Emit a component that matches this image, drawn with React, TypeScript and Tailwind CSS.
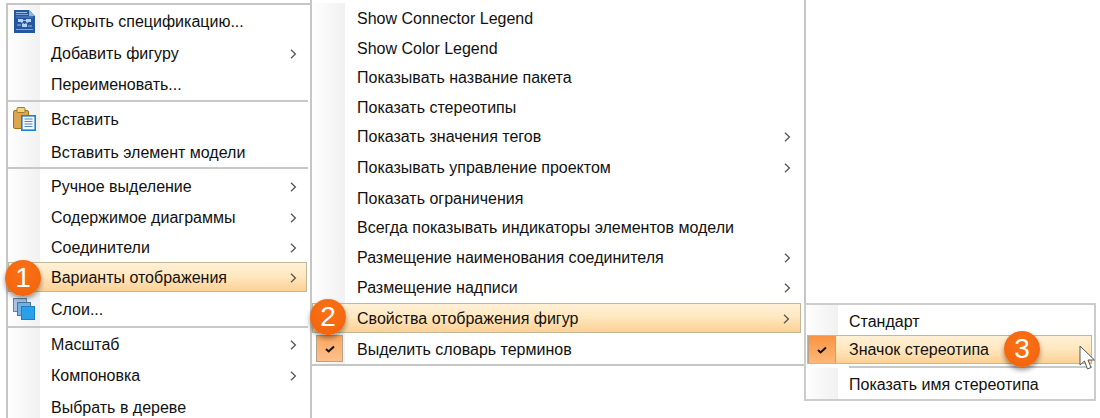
import React from "react";

type Row = { label: string; h: number; arrow?: boolean; icon?: React.ReactNode };

const Chevron = () => (
  <svg width="7" height="10" viewBox="0 0 7 10" className="shrink-0">
    <path d="M1 0.8 L5.4 5 L1 9.2" fill="none" stroke="#555" strokeWidth="1.3" />
  </svg>
);

const SpecIcon = () => (
  <svg width="21" height="23" viewBox="0 0 21 23">
    <path d="M0 0 H15 L21 6 V23 H0 Z" fill="#2557a0" />
    <path d="M15 0 L21 6 H15 Z" fill="#8fb4e0" />
    <rect x="2" y="2" width="11" height="1" fill="#9dbde4" />
    <rect x="2" y="4" width="12" height="1" fill="#7ca3d6" />
    <rect x="2" y="6.5" width="17" height="1" fill="#5f8cc8" />
    <rect x="4" y="9" width="5" height="3" fill="#b8d2f0" />
    <rect x="12" y="9" width="5" height="3" fill="#b8d2f0" />
    <rect x="8" y="14" width="5" height="3" fill="#b8d2f0" />
    <path d="M7 12 L10 14 M14 12 L11 14 M9 10.5 H12 M3 15 H7 M14 16 H18" stroke="#9fc0e8" strokeWidth="1" />
    <rect x="2" y="19" width="17" height="1" fill="#7ea5d6" />
  </svg>
);

const PasteIcon = () => (
  <svg width="23" height="24" viewBox="0 0 23 24">
    <rect x="0.5" y="3.5" width="15" height="18" rx="1.5" fill="#dca64e" stroke="#a06f22" />
    <rect x="4" y="0.5" width="8" height="5" rx="1" fill="#f3d27c" stroke="#a67a2c" />
    <rect x="8.8" y="8.8" width="13.4" height="14.4" fill="#f2f8fe" stroke="#1d7fd0" strokeWidth="1.6" />
    <path d="M11.5 12 H19.5 M11.5 14.5 H19.5 M11.5 17 H19.5 M11.5 19.5 H19.5" stroke="#5d86ad" strokeWidth="1" />
  </svg>
);

const LayersIcon = () => (
  <svg width="22" height="22" viewBox="0 0 22 22">
    <rect x="0.5" y="0.5" width="13" height="13" fill="#a9c6e6" stroke="#6485ab" />
    <rect x="4.5" y="4.5" width="13" height="13" fill="#79aee0" stroke="#4a76a3" />
    <rect x="8.5" y="8.5" width="13" height="13" fill="#28a0ea" stroke="#1c7fc6" />
  </svg>
);

const Check = () => (
  <svg width="12" height="10" viewBox="0 0 12 10">
    <path d="M2 5 L4.6 7.4 L10 2.4" fill="none" stroke="#111" strokeWidth="2" />
  </svg>
);

const Badge = ({ n, className }: { n: number; className: string }) => (
  <div
    className={`absolute z-20 flex h-[36px] w-[36px] items-center justify-center rounded-full bg-[radial-gradient(circle_at_50%_35%,#fb7118,#f0620a)] text-[28px] leading-none text-white shadow-[0px_3px_5px_rgba(0,0,0,0.4)] ${className}`}
  >
    {n}
  </div>
);

const Cursor = () => (
  <svg width="18" height="26" viewBox="0 0 18 26" className="absolute left-[1079px] top-[345px] z-30">
    <path d="M1 1 V20 L5.5 16 L8.5 24 L12 22.5 L9 15 H15.5 Z" fill="#fff" stroke="#555" strokeWidth="1" />
  </svg>
);

const MenuRow = ({ r, gutter, arrowRight, drop = 1, pad = 12 }: { r: Row; gutter: number; arrowRight: number; drop?: number; pad?: number }) => (
  <div className="flex" style={{ height: r.h }}>
    <div
      className="flex shrink-0 items-center justify-center bg-[linear-gradient(to_right,#fefefe,#f1f1f1)]"
      style={{ width: gutter }}
    >
      {r.icon}
    </div>
    <div
      className="flex min-w-0 flex-1 items-center justify-between"
      style={{ paddingRight: arrowRight, paddingTop: drop, paddingLeft: pad }}
    >
      <span className="whitespace-nowrap">{r.label}</span>
      {r.arrow && <Chevron />}
    </div>
  </div>
);

const Separator = () => <div className="mr-[2px] h-[2px] bg-[#c8c8c8]" />;

const Highlight = ({
  h,
  gutter,
  arrowRight,
  label,
  arrow,
  checked,
  pad = 12,
  drop = 1,
  className = "",
}: {
  h: number;
  gutter: number;
  arrowRight: number;
  label: string;
  arrow?: boolean;
  checked?: boolean;
  pad?: number;
  drop?: number;
  className?: string;
}) => (
  <div
    className={`flex border border-[#c4b699] bg-[linear-gradient(to_bottom,#fff0d6,#ffe8c0_45%,#fdd095)] ${className}`}
    style={{ height: h }}
  >
    <div
      className={`flex shrink-0 items-center justify-center ${checked ? "border-x border-[#b3a48e] bg-[linear-gradient(to_bottom,#fa9442,#fdb877)]" : ""}`}
      style={{ width: gutter }}
    >
      {checked && <Check />}
    </div>
    <div className="flex flex-1 items-center justify-between" style={{ paddingRight: arrowRight, paddingLeft: pad, paddingTop: drop }}>
      <span className="whitespace-nowrap">{label}</span>
      {arrow && <Chevron />}
    </div>
  </div>
);

const menu1a: Row[] = [
  { label: "Открыть спецификацию...", h: 32, icon: <SpecIcon /> },
  { label: "Добавить фигуру", h: 31, arrow: true },
  { label: "Переименовать...", h: 32 },
];
const menu1b: Row[] = [
  { label: "Вставить", h: 33, icon: <PasteIcon /> },
  { label: "Вставить элемент модели", h: 32 },
];
const menu1c: Row[] = [
  { label: "Ручное выделение", h: 33, arrow: true },
  { label: "Содержимое диаграммы", h: 30, arrow: true },
  { label: "Соединители", h: 30, arrow: true },
];
const menu1d: Row[] = [
  { label: "Масштаб", h: 31, arrow: true },
  { label: "Компоновка", h: 31, arrow: true },
  { label: "Выбрать в дереве", h: 32 },
];

const menu2: Row[] = [
  { label: "Show Connector Legend", h: 30 },
  { label: "Show Color Legend", h: 30 },
  { label: "Показывать название пакета", h: 29 },
  { label: "Показать стереотипы", h: 30 },
  { label: "Показать значения тегов", h: 29, arrow: true },
  { label: "Показывать управление проектом", h: 33, arrow: true },
  { label: "Показать ограничения", h: 28 },
  { label: "Всегда показывать индикаторы элементов модели", h: 31 },
  { label: "Размещение наименования соединителя", h: 29, arrow: true },
  { label: "Размещение надписи", h: 31, arrow: true },
];

export default function App() {
  return (
    <div className="relative h-[418px] w-[1100px] overflow-hidden bg-white font-['Liberation_Sans',Arial,sans-serif] text-[16px] text-[#111]">
      <div className="flex items-start pl-[6px]">
        {/* First menu */}
        <div className="mt-[3px] h-[430px] w-[306px] shrink-0 border-x-2 border-t-2 border-[#c6c6c6] bg-white">
          {menu1a.map((r) => <MenuRow key={r.label} r={r} gutter={32} arrowRight={13} pad={11} drop={2} />)}
          <Separator />
          {menu1b.map((r) => <MenuRow key={r.label} r={r} gutter={32} arrowRight={13} pad={11} drop={3} />)}
          <Separator />
          {menu1c.map((r) => <MenuRow key={r.label} r={r} gutter={32} arrowRight={13} pad={11} drop={2} />)}
          <Highlight h={30} gutter={31} arrowRight={9} label="Варианты отображения" arrow pad={11} drop={2} className="mr-[3px]" />
          <MenuRow r={{ label: "Слои...", h: 34, icon: <LayersIcon /> }} gutter={32} arrowRight={13} pad={11} drop={2} />
          <Separator />
          {menu1d.map((r) => <MenuRow key={r.label} r={r} gutter={32} arrowRight={13} pad={11} drop={3} />)}
        </div>

        {/* Second menu */}
        <div className="-ml-[2px] w-[496px] shrink-0 border-x-2 border-b-2 border-[#c6c6c6] bg-white pt-[3px]">
          {menu2.map((r) => <MenuRow key={r.label} r={r} gutter={33} arrowRight={13} />)}
          <Highlight h={30} gutter={32} arrowRight={10} label="Свойства отображения фигур" arrow className="mr-[3px]" />
          <div className="flex h-[31px]">
            <div className="flex w-[33px] shrink-0 items-center justify-start bg-[linear-gradient(to_right,#fefefe,#f1f1f1)] pl-[4px]">
              <div className="flex h-[27px] w-[27px] items-center justify-center border border-[#b3a48e] bg-[linear-gradient(to_bottom,#fba75f,#fdc08d)]">
                <Check />
              </div>
            </div>
            <div className="flex flex-1 items-center pl-[12px] pt-[2px]">
              <span className="whitespace-nowrap">Выделить словарь терминов</span>
            </div>
          </div>
        </div>

        {/* Third menu */}
        <div className="-ml-[2px] mt-[303px] w-[292px] shrink-0 border-2 border-[#cccccc] bg-white">
          <MenuRow r={{ label: "Стандарт", h: 30 }} gutter={32} arrowRight={13} pad={11} drop={3} />
          <Highlight h={29} gutter={28} arrowRight={10} label="Значок стереотипа" checked pad={13} className="ml-[1px] mr-[2px]" />
          <div className="ml-[43px] mr-[2px] mt-[2px] h-[2px] bg-[#c8c8c8]" />
          <MenuRow r={{ label: "Показать имя стереотипа", h: 31 }} gutter={32} arrowRight={13} pad={11} drop={3} />
        </div>
      </div>

      <Badge n={1} className="left-[5px] top-[260px]" />
      <Badge n={2} className="left-[310px] top-[299px]" />
      <Badge n={3} className="left-[1004px] top-[331px]" />
      <Cursor />
    </div>
  );
}
